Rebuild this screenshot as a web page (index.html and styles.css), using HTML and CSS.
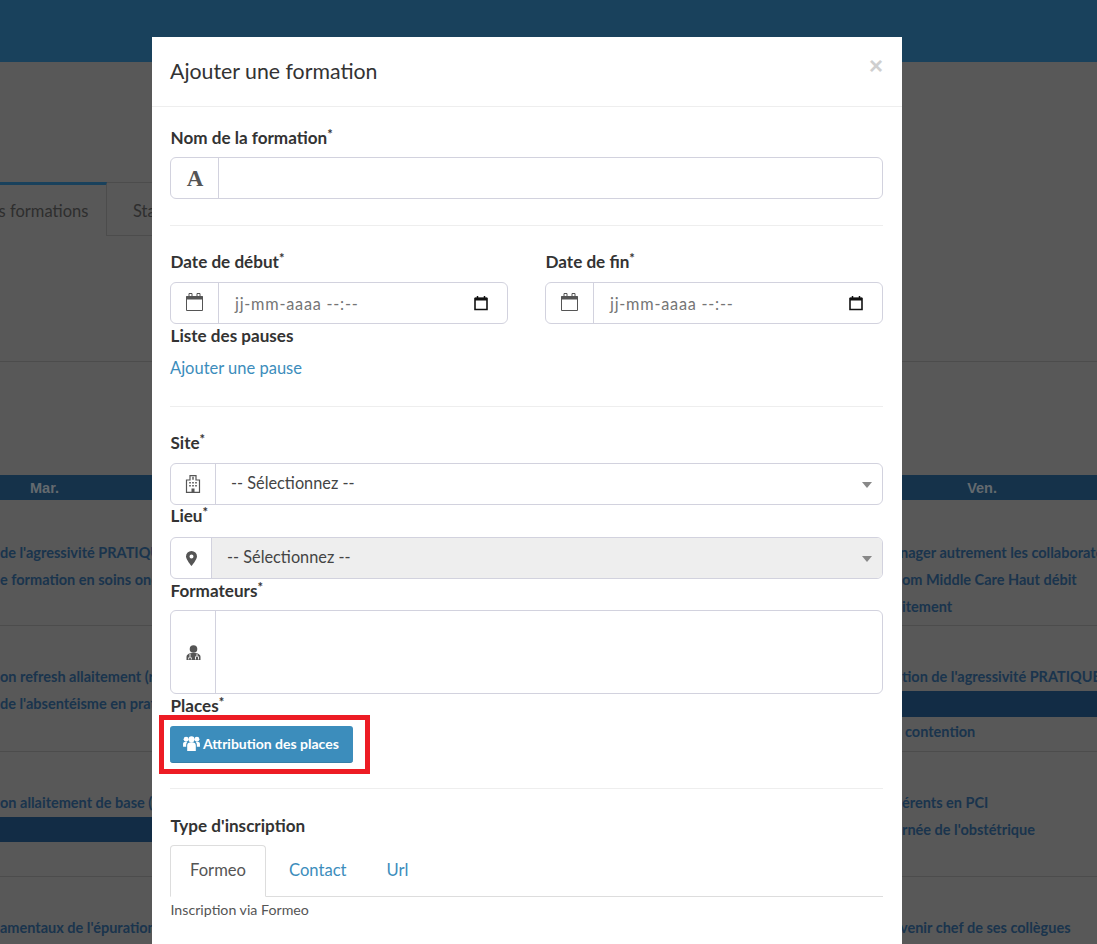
FILE: index.html
```html
<!DOCTYPE html>
<html lang="fr">
<head>
<meta charset="utf-8">
<title>Ajouter une formation</title>
<link rel="stylesheet" href="styles.css">
</head>
<body>
<div class="page">
  <header class="topbar"></header>
  <div class="hero"></div>
  <nav class="page-tabs">
    <span class="page-tab page-tab-active">Les formations</span>
    <span class="page-tab">Statistiques</span>
  </nav>
  <div class="toolbar"></div>
  <div class="calendar">
    <div class="day-head"><span>Mar.</span><span>Ven.</span></div>
    <div class="week week-a">
      <div class="col-left">
        <p>de l'agressivité PRATIQUE</p>
        <p>e formation en soins onco</p>
      </div>
      <div class="col-right">
        <p>nager autrement les collaborateurs</p>
        <p class="in-2">om Middle Care Haut débit</p>
        <p class="in-2">itement</p>
      </div>
    </div>
    <div class="week week-b">
      <div class="col-left">
        <p>on refresh allaitement (re</p>
        <p>de l'absentéisme en pratique</p>
      </div>
      <div class="col-right">
        <p class="in-2">tion de l'agressivité PRATIQUE</p>
        <div class="month-band"></div>
        <p class="in-5 after-band">contention</p>
      </div>
    </div>
    <div class="week week-c">
      <div class="col-left">
        <p>on allaitement de base (re</p>
        <div class="month-band"></div>
      </div>
      <div class="col-right">
        <p class="in-2">érents en PCI</p>
        <p class="in-2">rnée de l'obstétrique</p>
      </div>
    </div>
    <div class="week week-d">
      <div class="col-left"><p>amentaux de l'épuration</p></div>
      <div class="col-right"><p>venir chef de ses collègues</p></div>
    </div>
  </div>
</div>
<div class="overlay"></div>
<main class="modal">
  <div class="modal-head">
    <h1>Ajouter une formation</h1>
    <span class="close">×</span>
  </div>
  <div class="modal-body">
    <label class="lbl lbl-31">Nom de la formation<sup>*</sup></label>
    <div class="group">
      <span class="addon addon-48">
        <svg class="ic ic-a" width="18" height="16" viewBox="0 0 18 16"><text x="9" y="15.500" text-anchor="middle" class="serif-a">A</text></svg>
      </span>
      <span class="field"></span>
    </div>
    <hr class="rule rule-name">
    <div class="two">
      <div class="two-col">
        <label class="lbl">Date de début<sup>*</sup></label>
        <div class="group">
          <span class="addon addon-48">
            <svg class="ic ic-cal" width="17" height="18" viewBox="0 0 17 18"><path d="M.5 3.500h16v14H.5z" fill="#fff" stroke="#555"/><path d="M.5 3h16v3.500H.5z" fill="#555"/><path d="M3 .5h3v3H3zM11 .5h3v3h-3z" fill="#fff" stroke="#555"/></svg>
          </span>
          <span class="field field-date"><span class="ph">jj-mm-aaaa --:--</span><svg class="picker" width="14" height="16" viewBox="0 0 14 16"><path d="M1 3.500h12v11H1z" fill="none" stroke="#111" stroke-width="1.600"/><path d="M1 2.500h12v3H1z" fill="#111"/><path d="M3.500 1v2M10.500 1v2" stroke="#111" stroke-width="1.500"/></svg></span>
        </div>
      </div>
      <div class="two-col">
        <label class="lbl">Date de fin<sup>*</sup></label>
        <div class="group">
          <span class="addon addon-48">
            <svg class="ic ic-cal" width="17" height="18" viewBox="0 0 17 18"><path d="M.5 3.500h16v14H.5z" fill="#fff" stroke="#555"/><path d="M.5 3h16v3.500H.5z" fill="#555"/><path d="M3 .5h3v3H3zM11 .5h3v3h-3z" fill="#fff" stroke="#555"/></svg>
          </span>
          <span class="field field-date"><span class="ph">jj-mm-aaaa --:--</span><svg class="picker" width="14" height="16" viewBox="0 0 14 16"><path d="M1 3.500h12v11H1z" fill="none" stroke="#111" stroke-width="1.600"/><path d="M1 2.500h12v3H1z" fill="#111"/><path d="M3.500 1v2M10.500 1v2" stroke="#111" stroke-width="1.500"/></svg></span>
        </div>
      </div>
    </div>
    <label class="lbl lbl-25">Liste des pauses</label>
    <a class="link-add">Ajouter une pause</a>
    <hr class="rule rule-pause">
    <label class="lbl">Site<sup>*</sup></label>
    <div class="group">
      <span class="addon addon-45">
        <svg class="ic" width="14" height="18" viewBox="0 0 14 18"><path d="M4 .6h6V5h3.500v12.400H.5V5H4z" fill="#fff" stroke="#555" stroke-width="1.200"/><path d="M6.300 1.800h1.400v3H6.300z" fill="#555"/><path d="M3 7h2v1.500H3zM6 7h2v1.500H6zM9 7h2v1.500H9zM3 10h2v1.500H3zM6 10h2v1.500H6zM9 10h2v1.500H9z" fill="#777"/><path d="M5.500 13.500h3V17h-3z" fill="#555"/></svg>
      </span>
      <span class="field field-select"><span class="sel-text">-- Sélectionnez --</span><i class="caret"></i></span>
    </div>
    <label class="lbl lbl-lieu">Lieu<sup>*</sup></label>
    <div class="group">
      <span class="addon addon-41">
        <svg class="ic" width="11" height="15" viewBox="0 0 11 15"><path fill-rule="evenodd" d="M5.500 0A5.500 5.500 0 0 0 0 5.500C0 8.500 5.500 15 5.500 15S11 8.500 11 5.500A5.500 5.500 0 0 0 5.500 0zm0 3.500a2 2 0 1 1 0 4 2 2 0 0 1 0-4z" fill="#555"/></svg>
      </span>
      <span class="field field-select field-disabled"><span class="sel-text">-- Sélectionnez --</span><i class="caret"></i></span>
    </div>
    <label class="lbl lbl-31">Formateurs<sup>*</sup></label>
    <div class="group group-tall">
      <span class="addon addon-45">
        <svg class="ic" width="15" height="15" viewBox="0 0 15 15"><circle cx="7.500" cy="4" r="3.800" fill="#555"/><path d="M.5 15v-3c0-2.500 2.500-4 7-4s7 1.500 7 4v3z" fill="#555"/><path d="M4 9v2.500M11 9v1.500M2.700 14.500v-1.500c0-1.400 2.600-1.400 2.600 0v1.500M9.500 14.500v-2.500c0-1.400 3-1.400 3 0v2.500" fill="none" stroke="#fff" stroke-width=".9"/></svg>
      </span>
      <span class="field"></span>
    </div>
    <label class="lbl">Places<sup>*</sup></label>
    <button class="btn-places" type="button">
      <svg width="17" height="15" viewBox="0 0 18 16"><g fill="#fff"><circle cx="9" cy="3.500" r="3.300"/><circle cx="3.200" cy="3.400" r="2.600"/><circle cx="14.800" cy="3.400" r="2.600"/><path d="M4.400 16V10c0-2.300 1.500-3.400 4.600-3.400s4.600 1.100 4.600 3.400v6z"/><path d="M0 11.500V8.300C0 7 1 6.200 3 6.200c.6 0 1.100.1 1.500.2-.8.800-1.200 1.900-1.200 3.300v1.800zM18 11.500V8.300c0-1.300-1-2.100-3-2.100-.6 0-1.100.1-1.500.2.800.8 1.200 1.900 1.200 3.300v1.800z"/></g></svg>
      <span class="btn-label">Attribution des places</span>
    </button>
    <hr class="rule rule-places">
    <label class="lbl lbl-31">Type d'inscription</label>
    <div class="tabs">
      <span class="tab tab-active">Formeo</span>
      <a class="tab">Contact</a>
      <a class="tab">Url</a>
    </div>
    <p class="tab-note">Inscription via Formeo</p>
  </div>
</main>
<div class="annotation"></div>
</body>
</html>
```
FILE: styles.css
```css
* { box-sizing: border-box; }
html, body { margin: 0; height: 944px; overflow: hidden; }
body { position: relative; background: #b0b0b0; font-family: "Lato", "Noto Sans", sans-serif; color: #333; }

/* page behind the dialog */
.page { height: 944px; overflow: hidden; }
.topbar { height: 62px; background: #3282b8; }
.hero { height: 120px; }
.page-tabs { display: flex; height: 54px; margin-left: -44px; }
.page-tab { padding: 16px 26px; font-size: 16.500px; line-height: 24px; color: #5c5c5c; border: solid #999; border-width: 1px 1px 1px 0; white-space: nowrap; }
.page-tab-active { width: 151px; border-top: 3px solid #3282b8; border-bottom: 0; padding-top: 14px; }
.toolbar { height: 239px; position: relative; }
.toolbar::after { content: ""; position: absolute; left: 0; right: 0; top: 125px; height: 1px; background: #999; }

.calendar { font-size: 14.500px; font-weight: 700; color: #35699a; }
.day-head { height: 25px; background: #2a6494; color: #c8d4de; display: flex; justify-content: space-between; padding: 0 100px 0 30px; font-family: "Liberation Sans", sans-serif; font-size: 14.500px; line-height: 26px; }
.week { display: flex; justify-content: space-between; border-bottom: 1px solid #999; overflow: hidden; }
.week p { margin: 0; white-space: nowrap; line-height: 27px; }
.col-left { width: 152px; overflow: hidden; }
.col-right { width: 197px; overflow: hidden; }
.in-2 { padding-left: 2px; }
.in-5 { padding-left: 5px; }
.week-a { height: 126px; padding-top: 39px; }
.week-b { height: 126px; padding-top: 37px; }
.week-c { height: 125px; padding-top: 37px; }
.week-c .month-band { margin-top: 1px; }
.week-d { height: 67px; padding-top: 37px; border-bottom: 0; }
.month-band { height: 25px; background: #24588a; }
.week-b .month-band { height: 26px; margin-top: 1px; }
.week p.after-band { margin-top: 1px; }

.overlay { position: absolute; inset: 0; background: rgba(0,0,0,.5); }

/* dialog */
.modal { position: absolute; left: 152px; top: 37px; width: 750px; height: 920px; background: #fff; }
.modal-head { height: 70px; border-bottom: 1px solid #eee; display: flex; justify-content: space-between; padding: 19px 19px 0 18px; }
.modal-head h1 { margin: 0; font-size: 21.300px; font-weight: 400; line-height: 30px; color: #333; }
.close { font-size: 24px; font-weight: 700; color: #cfcfcf; line-height: 20px; font-family: "Liberation Sans", sans-serif; }
.modal-body { padding: 19px 19px 0 18px; }

.lbl { display: block; font-size: 17.100px; font-weight: 700; line-height: 24px; height: 32px; color: #333; padding-left: .5px; }
.lbl sup { font-size: 13px; line-height: 0; font-weight: 700; vertical-align: 5px; }
.lbl-31 { height: 31px; }
.lbl-25 { height: 25px; }
.lbl-lieu { line-height: 22px; }

.group { display: flex; height: 42px; border: 1px solid #d2d2de; border-radius: 6px; overflow: hidden; background: #fff; }
.group-tall { height: 84px; }
.addon { flex: none; display: flex; align-items: center; justify-content: center; border-right: 1px solid #d2d2de; }
.addon-48 { width: 48px; }
.addon-45 { width: 45px; }
.addon-41 { width: 41px; }
.ic { display: block; overflow: visible; }
.ic-cal { margin-bottom: 2px; }
.serif-a { font-family: "Liberation Serif", serif; font-weight: 700; font-size: 23px; fill: #555; }
.field { flex: 1; min-width: 0; display: flex; align-items: center; position: relative; font-size: 16.300px; color: #555; }
.field-date { padding: 0 19px 0 16px; justify-content: space-between; }
.ph { color: #757575; letter-spacing: .75px; }
.picker { flex: none; }
.field-select { padding: 0 0 4px 15px; }
.sel-text { color: #444; }
.field-disabled { background: #eee; }
.caret { position: absolute; right: 10px; top: 50%; margin-top: -2px; border: 5px solid transparent; border-top: 6px solid #888; border-bottom: 0; }

.rule { border: 0; border-top: 1px solid #eee; margin: 0; }
.rule-name { margin: 26px 0 24px; }
.rule-pause { margin: 26px 0 24px; }
.rule-places { margin: 25px 0 25px; }
.two { display: flex; justify-content: space-between; }
.two-col { width: 338px; }
.link-add { display: block; font-size: 16.500px; line-height: 24px; color: #3c8dbc; margin-top: 7px; }

.btn-places { display: flex; align-items: center; gap: 3px; height: 37px; width: 183px; padding: 0 0 2px 13px; border: 0; border-bottom: 1px solid #367fa9; border-radius: 3px; background: #3c8dbc; color: #fff; font: 700 14px "Lato", "Noto Sans", sans-serif; }

.tabs { display: flex; height: 52px; border-bottom: 1px solid #ddd; font-size: 16.600px; }
.tab { display: flex; align-items: center; padding: 0 20px 2px; color: #3c8dbc; }
.tab-active + .tab { padding-left: 21px; }
.tab-active { width: 96px; height: 52px; padding: 0 0 2px; margin-right: 2px; justify-content: center; color: #555; border: 1px solid #ddd; border-bottom-color: #fff; border-radius: 4px 4px 0 0; background: #fff; }
.tab-note { margin: 4px 0 0; font-size: 14.200px; line-height: 18px; color: #555; padding-left: .5px; }

.annotation { position: absolute; left: 159px; top: 715px; width: 211px; height: 59px; border: 5px solid #ed1c24; }
```
